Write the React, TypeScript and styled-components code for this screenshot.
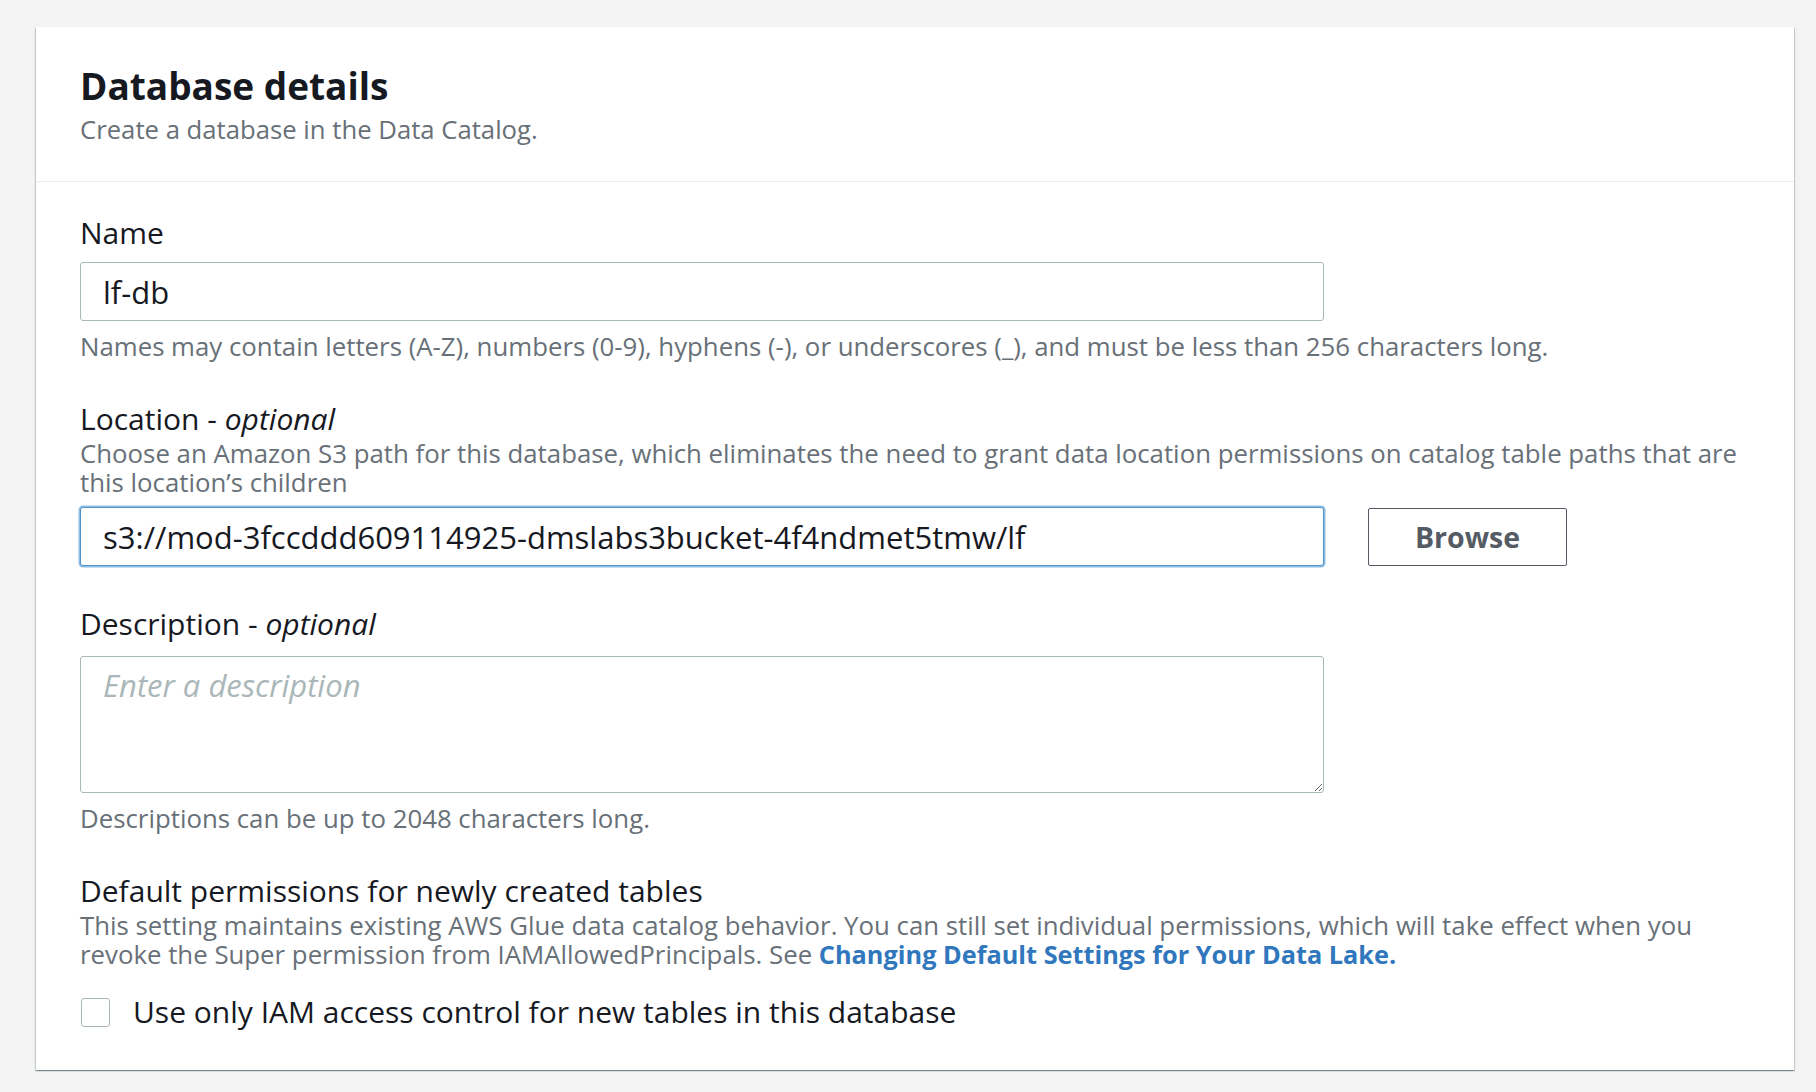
import React from "react";
import styled, { createGlobalStyle } from "styled-components";

const GlobalStyle = createGlobalStyle`
  html, body {
    margin: 0;
    padding: 0;
    background: #f3f3f4;
  }
  body {
    font-family: "Open Sans", "Noto Sans", Arial, sans-serif;
    color: #16191f;
  }
  * { box-sizing: border-box; }
`;

const Page = styled.div`
  padding: 27px 22px 23px 36px;
  min-height: 1092px;
`;

const Card = styled.section`
  background: #ffffff;
  box-shadow: 0 1px 1px 0 rgba(0, 28, 36, 0.3), 1px 1px 1px 0 rgba(0, 28, 36, 0.15),
    -1px 1px 1px 0 rgba(0, 28, 36, 0.15);
`;

const CardHeader = styled.header`
  padding: 36px 44px 36px;
  border-bottom: 1px solid #eaeded;
`;

const Title = styled.h2`
  margin: 0;
  font-size: 37px;
  line-height: 46px;
  font-weight: 700;
  color: #16191f;
`;

const Subtitle = styled.p`
  margin: 6px 0 0;
  font-size: 25.7px;
  line-height: 30px;
  color: #687078;
`;

const CardBody = styled.div`
  padding: 33px 44px 40px;
  display: flex;
  flex-direction: column;
  gap: 40px;
`;

const Field = styled.div`
  display: flex;
  flex-direction: column;
`;

const Label = styled.label`
  font-size: 30px;
  line-height: 36px;
  color: #16191f;
  em {
    font-style: italic;
  }
`;

const Description = styled.div`
  margin-top: 2px;
  font-size: 25.8px;
  line-height: 29px;
  color: #687078;
  max-width: 1670px;
`;

const Hint = styled.div`
  margin-top: 10px;
  font-size: 25.8px;
  line-height: 30px;
  color: #687078;
`;

const ControlRow = styled.div<{ $gap: number }>`
  margin-top: ${(p) => p.$gap}px;
  display: flex;
  align-items: center;
  gap: 44px;
`;

const TextInput = styled.input<{ $focused?: boolean }>`
  width: 1244px;
  height: 59px;
  padding: 0 22px;
  font-family: inherit;
  font-size: 31px;
  color: #16191f;
  background: #ffffff;
  border: 1px solid ${(p) => (p.$focused ? "#4f93cc" : "#aab7b8")};
  border-radius: 3px;
  box-shadow: ${(p) => (p.$focused ? "0 0 0 1.5px #8fbde3" : "none")};
  outline: none;
`;

const TextArea = styled.textarea`
  width: 1244px;
  height: 137px;
  padding: 10px 22px;
  font-family: inherit;
  font-size: 31px;
  line-height: 36px;
  color: #16191f;
  background: #ffffff;
  border: 1px solid #aab7b8;
  border-radius: 3px;
  resize: vertical;
  outline: none;
  &::placeholder {
    color: #aab7b8;
    font-style: italic;
  }
`;

const BrowseButton = styled.button`
  width: 199px;
  height: 58px;
  background: #ffffff;
  border: 1px solid #545b64;
  border-radius: 2px;
  font-family: inherit;
  font-size: 28.5px;
  font-weight: 700;
  color: #545b64;
  cursor: pointer;
`;

const Link = styled.a`
  display: inline-block;
  font-size: 25.3px;
  line-height: 29px;
  color: #3177bd;
  font-weight: 700;
  text-decoration: none;
`;

const CheckboxRow = styled.label`
  margin-top: 25px;
  display: flex;
  align-items: center;
  gap: 23px;
  font-size: 30px;
  line-height: 36px;
  color: #16191f;
`;

const CheckboxBox = styled.span`
  width: 29px;
  height: 29px;
  margin-left: 1px;
  border: 1px solid #aab7b8;
  border-radius: 3px;
  background: #ffffff;
  flex-shrink: 0;
`;

export default function App() {
  return (
    <>
      <GlobalStyle />
      <Page>
        <Card>
          <CardHeader>
            <Title>Database details</Title>
            <Subtitle>Create a database in the Data Catalog.</Subtitle>
          </CardHeader>
          <CardBody>
            <Field>
              <Label>Name</Label>
              <ControlRow $gap={11}>
                <TextInput defaultValue="lf-db" />
              </ControlRow>
              <Hint>
                Names may contain letters (A-Z), numbers (0-9), hyphens (-), or underscores (_), and must be
                less than 256 characters long.
              </Hint>
            </Field>
            <Field>
              <Label>
                Location - <em>optional</em>
              </Label>
              <Description>
                Choose an Amazon S3 path for this database, which eliminates the need to grant data location
                permissions on catalog table paths that are this location’s children
              </Description>
              <ControlRow $gap={10}>
                <TextInput $focused defaultValue="s3://mod-3fccddd609114925-dmslabs3bucket-4f4ndmet5tmw/lf" />
                <BrowseButton>Browse</BrowseButton>
              </ControlRow>
            </Field>
            <Field>
              <Label>
                Description - <em>optional</em>
              </Label>
              <ControlRow $gap={14}>
                <TextArea placeholder="Enter a description" />
              </ControlRow>
              <Hint>Descriptions can be up to 2048 characters long.</Hint>
            </Field>
            <Field>
              <Label>Default permissions for newly created tables</Label>
              <Description>
                This setting maintains existing AWS Glue data catalog behavior. You can still set individual
                permissions, which will take effect when you revoke the Super permission from
                IAMAllowedPrincipals. See <Link href="#">Changing Default Settings for Your Data Lake.</Link>
              </Description>
              <CheckboxRow>
                <CheckboxBox />
                Use only IAM access control for new tables in this database
              </CheckboxRow>
            </Field>
          </CardBody>
        </Card>
      </Page>
    </>
  );
}
